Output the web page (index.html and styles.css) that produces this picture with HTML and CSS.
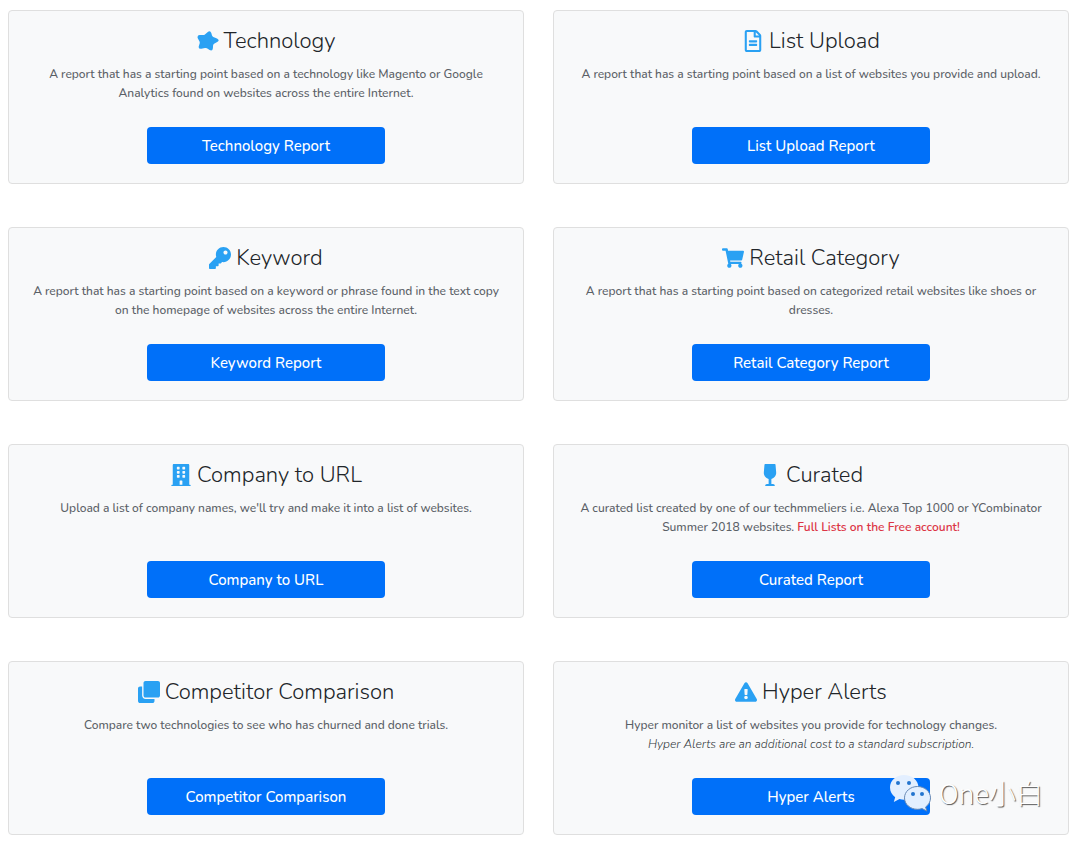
FILE: index.html
```html
<!DOCTYPE html>
<html lang="en">
<head>
    <meta charset="UTF-8">
    <meta name="viewport" content="width=device-width, initial-scale=1.0">
    <title>Create Report</title>
    <link rel="stylesheet" href="styles.css">
</head>
<body>
    <main class="reports">
        <section class="card">
            <h2 class="card-title">
                <svg class="icon" viewBox="0 0 22 22"><path d="M10.500 2.200Q13.200-.2 14.300 3l.7 2.500q.3 1 1.300 1.400l3.700 1.500q3 1.600.6 3.300l-3.500 2q-.9.6-1 1.600l-.2 2.900q-.4 3.400-3.300 1.900l-2.700-1.800q-.9-.5-1.900-.3l-3.700.8q-3.200.3-2.500-2.500l.9-3.100q.2-1-.3-1.900L.9 8.600Q-.4 5.500 2.700 5.100l3.500-.1q1 0 1.700-.6z"/></svg>
                <span>Technology</span>
            </h2>
            <p class="card-text">A report that has a starting point based on a technology like Magento or Google Analytics found on websites across the entire Internet.</p>
            <button class="btn" type="button">Technology Report</button>
        </section>

        <section class="card">
            <h2 class="card-title">
                <svg class="icon" viewBox="-64 0 512 512"><path d="M288 248v28c0 6.600-5.400 12-12 12H108c-6.600 0-12-5.400-12-12v-28c0-6.600 5.400-12 12-12h168c6.600 0 12 5.400 12 12zm-12 72H108c-6.600 0-12 5.400-12 12v28c0 6.600 5.400 12 12 12h168c6.600 0 12-5.400 12-12v-28c0-6.600-5.400-12-12-12zm108-188.100V464c0 26.500-21.500 48-48 48H48c-26.500 0-48-21.500-48-48V48C0 21.500 21.500 0 48 0h204.100C264.800 0 277 5.100 286 14.100L369.900 98c9 8.900 14.100 21.200 14.100 33.900zm-128-80V128h76.100L256 51.900zM336 464V176H232c-13.300 0-24-10.700-24-24V48H48v416h288z"/></svg>
                <span>List Upload</span>
            </h2>
            <p class="card-text">A report that has a starting point based on a list of websites you provide and upload.</p>
            <button class="btn" type="button">List Upload Report</button>
        </section>

        <section class="card">
            <h2 class="card-title">
                <svg class="icon" viewBox="0 0 512 512"><path d="M512 176c0 97.200-78.800 176-176 176-11.200 0-22.200-1.100-32.800-3.100l-24 27A24 24 0 0 1 261.200 384H224v40c0 13.300-10.700 24-24 24h-40v40c0 13.300-10.700 24-24 24H24c-13.300 0-24-10.700-24-24v-78.100c0-6.400 2.500-12.500 7-17l161.800-161.800C162.900 213.800 160 195.300 160 176 160 78.800 238.800 0 336 0c97.500 0 176 78.500 176 176zm-176-48c0 26.500 21.500 48 48 48s48-21.500 48-48-21.500-48-48-48-48 21.500-48 48z"/></svg>
                <span>Keyword</span>
            </h2>
            <p class="card-text">A report that has a starting point based on a keyword or phrase found in the text copy on the homepage of websites across the entire Internet.</p>
            <button class="btn" type="button">Keyword Report</button>
        </section>

        <section class="card">
            <h2 class="card-title">
                <svg class="icon" viewBox="0 0 576 512"><path d="M528.100 301.300l47.300-208C578.800 78.300 567.400 64 552 64H159.200l-9.200-44.800C147.800 8 137.900 0 126.500 0H24C10.700 0 0 10.700 0 24v16c0 13.300 10.700 24 24 24h69.900l70.200 343.400C147.300 417.100 136 435.200 136 456c0 30.900 25.100 56 56 56s56-25.100 56-56c0-15.700-6.400-29.800-16.800-40h209.600C430.400 426.200 424 440.300 424 456c0 30.900 25.100 56 56 56s56-25.100 56-56c0-22.200-12.900-41.300-31.600-50.400l5.500-24.300c3.400-15-8-29.300-23.400-29.300H218.100l-6.500-32h293.100c11.200 0 20.900-7.800 23.400-18.700z"/></svg>
                <span>Retail Category</span>
            </h2>
            <p class="card-text">A report that has a starting point based on categorized retail websites like shoes or dresses.</p>
            <button class="btn" type="button">Retail Category Report</button>
        </section>

        <section class="card">
            <h2 class="card-title">
                <svg class="icon" viewBox="-32 0 512 512"><path d="M436 480h-20V24c0-13.300-10.700-24-24-24H56C42.700 0 32 10.700 32 24v456H12c-6.600 0-12 5.400-12 12v20h448v-20c0-6.600-5.400-12-12-12zM128 76c0-6.600 5.400-12 12-12h40c6.600 0 12 5.400 12 12v40c0 6.600-5.400 12-12 12h-40c-6.600 0-12-5.400-12-12V76zm0 96c0-6.600 5.400-12 12-12h40c6.600 0 12 5.400 12 12v40c0 6.600-5.400 12-12 12h-40c-6.600 0-12-5.400-12-12v-40zm52 148h-40c-6.600 0-12-5.400-12-12v-40c0-6.600 5.400-12 12-12h40c6.600 0 12 5.400 12 12v40c0 6.600-5.400 12-12 12zm76 160h-64v-84c0-6.600 5.400-12 12-12h40c6.600 0 12 5.400 12 12v84zm64-172c0 6.600-5.400 12-12 12h-40c-6.600 0-12-5.400-12-12v-40c0-6.600 5.400-12 12-12h40c6.600 0 12 5.400 12 12v40zm0-96c0 6.600-5.400 12-12 12h-40c-6.600 0-12-5.400-12-12v-40c0-6.600 5.400-12 12-12h40c6.600 0 12 5.400 12 12v40zm0-96c0 6.600-5.400 12-12 12h-40c-6.600 0-12-5.400-12-12V76c0-6.600 5.400-12 12-12h40c6.600 0 12 5.400 12 12v40z"/></svg>
                <span>Company to URL</span>
            </h2>
            <p class="card-text">Upload a list of company names, we'll try and make it into a list of websites.</p>
            <button class="btn" type="button">Company to URL</button>
        </section>

        <section class="card">
            <h2 class="card-title">
                <svg class="icon" viewBox="-112 0 512 512"><path d="M216 464h-40V346.800c68.500-15.900 118-79.800 111.400-154L272.100 14.500C271.400 6.300 264.700 0 256.600 0H31.400c-8.100 0-14.800 6.300-15.500 14.500L.6 192.800C-6 267 43.500 330.900 112 346.800V464H72c-22.100 0-40 17.900-40 40 0 4.400 3.600 8 8 8h208c4.400 0 8-3.600 8-8 0-22.100-17.900-40-40-40z"/></svg>
                <span>Curated</span>
            </h2>
            <p class="card-text">A curated list created by one of our techmmeliers i.e. Alexa Top 1000 or YCombinator Summer 2018 websites. <strong class="free">Full Lists on the Free account!</strong></p>
            <button class="btn" type="button">Curated Report</button>
        </section>

        <section class="card">
            <h2 class="card-title">
                <svg class="icon" viewBox="0 0 512 512"><path d="M464 0c26.500 0 48 21.500 48 48v288c0 26.500-21.500 48-48 48H176c-26.500 0-48-21.500-48-48V48c0-26.500 21.500-48 48-48h288M176 416c-44.100 0-80-35.900-80-80V128H48c-26.500 0-48 21.500-48 48v288c0 26.500 21.500 48 48 48h288c26.500 0 48-21.500 48-48v-48H176z"/></svg>
                <span>Competitor Comparison</span>
            </h2>
            <p class="card-text">Compare two technologies to see who has churned and done trials.</p>
            <button class="btn" type="button">Competitor Comparison</button>
        </section>

        <section class="card">
            <h2 class="card-title">
                <svg class="icon" viewBox="0 0 576 512"><path d="M569.500 440c18.500 32-4.700 72-41.600 72H48.100c-36.900 0-60-40.100-41.600-72L246.400 24c18.500-32 64.700-32 83.200 0l239.900 416zM288 354c-25.400 0-46 20.600-46 46s20.600 46 46 46 46-20.600 46-46-20.600-46-46-46zm-43.700-165.300l7.400 136c.4 6.400 5.600 11.300 12 11.300h48.500c6.400 0 11.600-5 12-11.300l7.400-136c.4-6.900-5.100-12.700-12-12.700h-63.400c-6.900 0-12.300 5.800-11.900 12.700z"/></svg>
                <span>Hyper Alerts</span>
            </h2>
            <p class="card-text">Hyper monitor a list of websites you provide for technology changes.<br><em class="note">Hyper Alerts are an additional cost to a standard subscription.</em></p>
            <button class="btn" type="button">Hyper Alerts</button>
            <div class="watermark">
                <svg class="watermark-logo" viewBox="0 0 42 38">
                    <path class="bubble" d="M15 1C7 1 1 6.500 1 13.500c0 4 2 7.400 5.200 9.700L4.800 28l5.700-2.900c1.400.5 3 .7 4.500.7 8 0 14.500-5.500 14.500-12.400S23 1 15 1z"/>
                    <path class="bubble front" d="M28.500 12.500c-7.200 0-13 5-13 11.400s5.800 11.400 13 11.400c1.600 0 3.200-.2 4.600-.7l4.700 2.500-1.200-4.100c3-2.100 4.900-5.300 4.900-9.100 0-6.400-5.800-11.400-13-11.400z"/>
                    <circle cx="9" cy="9" r="2"/>
                    <circle cx="20" cy="9" r="2"/>
                    <circle cx="24" cy="20" r="2"/>
                    <circle cx="33" cy="20" r="2"/>
                </svg>
                <span>One小白</span>
            </div>
        </section>
    </main>
</body>
</html>
```

FILE: styles.css
```css
body {
    margin: 0;
    background-color: #fff;
    font-family: Nunito, "Open Sans", "Noto Sans CJK SC", sans-serif;
    color: #212529;
}

.reports {
    display: grid;
    grid-template-columns: 1fr 1fr;
    gap: 43px 29px;
    padding: 10px 11px 7px 8px;
}

.card {
    position: relative;
    display: flex;
    flex-direction: column;
    align-items: center;
    padding: 17px 20px 19px;
    border: 1px solid #dfdfdf;
    border-radius: 4px;
    background-color: #f8f9fa;
    text-align: center;
}

.card-title {
    display: flex;
    align-items: center;
    gap: 5px;
    margin: 0 0 11px;
    font-size: 22px;
    font-weight: 300;
    line-height: 26px;
}

.icon {
    width: 22px;
    height: 22px;
    fill: #2aa1f3;
}

.card-text {
    min-height: 38px;
    margin: 0 0 24px;
    font-size: 12px;
    font-weight: 500;
    line-height: 19px;
    color: #5a6066;
}

.free {
    font-weight: 600;
    color: #dc3545;
}

.note {
    font-weight: 300;
    color: #343a40;
}

.btn {
    width: 238px;
    height: 37px;
    margin-top: auto;
    padding: 0;
    border: 0;
    border-radius: 4px;
    background-color: #0070f9;
    color: #fff;
    font-family: inherit;
    font-size: 15px;
    font-weight: 500;
    line-height: 22px;
}

/* account stamp in the corner of the last card */
.watermark {
    position: absolute;
    right: 25px;
    bottom: 22px;
    display: flex;
    align-items: center;
    gap: 8px;
    color: #fff;
    font-family: "Noto Sans CJK SC", sans-serif;
    font-size: 27px;
    font-weight: 300;
    line-height: 38px;
    text-shadow: 1px 1px 1px #555;
}

.watermark-logo {
    width: 42px;
    height: 38px;
    fill: #2374cf;
}

.watermark-logo .bubble {
    fill: #e3efff;
}

.watermark-logo .front {
    stroke: #6688b4;
}
```
